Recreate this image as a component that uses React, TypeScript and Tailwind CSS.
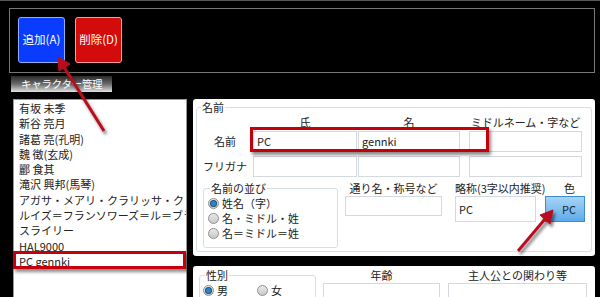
import React from 'react';

const names = [
  '有坂 未季',
  '新谷 亮月',
  '諸葛 亮(孔明)',
  '魏 徴(玄成)',
  '酈 食其',
  '滝沢 興邦(馬琴)',
  'アガサ・メアリ・クラリッサ・クリスティ',
  'ルイズ＝フランソワーズ＝ル＝ブラン',
  'スライリー',
  'HAL9000',
  'PC gennki',
];

const Radio: React.FC<{ checked?: boolean; label: string }> = ({ checked, label }) => (
  <div className="flex items-center h-[15px]">
    <span className="w-[11px] h-[11px] rounded-full border border-[#8e8f8f] bg-gradient-to-b from-[#e8e8e8] to-[#c9c9c9] flex items-center justify-center">
      {checked && <span className="w-[5px] h-[5px] rounded-full bg-[#2a86cc] ring-1 ring-[#1d4f78]" />}
    </span>
    <span className="ml-[3px] text-[#222]">{label}</span>
  </div>
);

const Field: React.FC<{ w: string; h?: string; value?: string }> = ({ w, h = 'h-[21px]', value }) => (
  <div className={`${w} ${h} border border-[#d4d9df] bg-white flex items-center pl-[3px] text-[#222]`}>{value}</div>
);

export default function App() {
  return (
    <div className="relative w-[600px] h-[297px] bg-black overflow-hidden text-[11px] font-['Noto_Sans_CJK_JP','Noto_Sans',sans-serif]">
      <div className="h-[1px] bg-[#555]" />
      {/* toolbar */}
      <div className="ml-[9px] mt-[7px] w-[586px] h-[65px] border border-[#777] flex gap-[10px] pl-[8px] pt-[8px]">
        <button className="w-[47px] h-[46px] rounded-[3px] border border-[#8fb0ff] bg-[#0a3cff] text-white text-[11.5px]">追加(A)</button>
        <button className="w-[47px] h-[46px] rounded-[3px] border border-[#ff9a9a] bg-[#d40b0b] text-white text-[11.5px]">削除(D)</button>
      </div>
      <div className="ml-[11px] mt-[3px] w-[101px] h-[16px] bg-gradient-to-b from-[#2a2a2a] via-[#6a6a6a] to-[#e4e4e4] text-white text-[10.5px] leading-[15px] pl-[10px] tracking-[-0.3px]">
        キャラクター管理
      </div>

      <div className="flex mt-[7px]">
        {/* list */}
        <div className="ml-[13px] w-[174px] h-[200px] bg-white border border-[#9a9a9a] pt-[1px] pl-[5px] overflow-hidden">
          {names.map((n) => (
            <div key={n} className="h-[15.3px] leading-[15.3px] whitespace-nowrap text-[#222]">{n}</div>
          ))}
        </div>

        {/* right */}
        <div className="ml-[6px] w-[402px]">
          <div className="h-[157px] bg-white rounded-[3px] pl-[3px] pr-[3px]">
            <fieldset className="border border-[#d5dfe5] rounded-[3px] h-[153px]">
              <legend className="ml-[4px] px-[1px] leading-[16px] text-[#222]">名前</legend>
              <div className="flex h-[14px] leading-[14px] text-[#222]">
                <div className="w-[56px]" />
                <div className="w-[104px] text-center">氏</div>
                <div className="ml-[1px] w-[102px] text-center">名</div>
                <div className="ml-[9px] w-[113px] text-center">ミドルネーム・字など</div>
              </div>
              <div className="flex items-center mt-[2px]">
                <div className="w-[56px] text-center text-[#222]">名前</div>
                <Field w="w-[104px]" value="PC" />
                <div className="ml-[1px]"><Field w="w-[102px]" value="gennki" /></div>
                <div className="ml-[9px]"><Field w="w-[113px]" /></div>
              </div>
              <div className="flex items-center mt-[4px]">
                <div className="w-[56px] text-center text-[#222]">フリガナ</div>
                <Field w="w-[104px]" />
                <div className="ml-[1px]"><Field w="w-[102px]" /></div>
                <div className="ml-[9px]"><Field w="w-[113px]" /></div>
              </div>
              <div className="flex mt-[3px]">
                <fieldset className="ml-[6px] w-[135px] h-[68px] border border-[#d5dfe5] rounded-[3px] pl-[4px]">
                  <legend className="ml-[2px] px-[1px] leading-[16px] text-[#222]">名前の並び</legend>
                  <Radio checked label="姓名（字）" />
                  <Radio label="名・ミドル・姓" />
                  <Radio label="名＝ミドル＝姓" />
                </fieldset>
                <div className="ml-[7px] w-[97px]">
                  <div className="leading-[16px] text-center text-[#222]">通り名・称号など</div>
                  <Field w="w-[97px]" h="h-[20px]" />
                </div>
                <div className="ml-[13px] w-[81px]">
                  <div className="leading-[16px] text-center text-[#222] whitespace-nowrap">略称(3字以内推奨)</div>
                  <Field w="w-[81px]" h="h-[26px]" value="PC" />
                </div>
                <div className="ml-[9px] w-[40px]">
                  <div className="leading-[16px] text-right pr-[10px] text-[#222]">色</div>
                  <div className="h-[26px] border border-[#3d8ccc] bg-gradient-to-b from-[#a6d4f6] to-[#5eaaea] flex items-center justify-end pr-[8px] text-[#1a2533]">PC</div>
                </div>
              </div>
            </fieldset>
          </div>

          <div className="mt-[10px] h-[40px] bg-white rounded-[3px] flex pt-[1px]">
            <fieldset className="ml-[6px] w-[117px] h-[40px] border border-[#d5dfe5] rounded-[3px] pl-[3px]">
              <legend className="ml-[2px] px-[1px] leading-[16px] text-[#222]">性別</legend>
              <div className="flex">
                <div className="w-[54px]"><Radio checked label="男" /></div>
                <Radio label="女" />
              </div>
            </fieldset>
            <div className="ml-[7px] w-[117px]">
              <div className="leading-[16px] text-center text-[#222]">年齢</div>
              <Field w="w-[117px]" />
            </div>
            <div className="ml-[8px] w-[139px]">
              <div className="leading-[16px] text-center text-[#222]">主人公との関わり等</div>
              <Field w="w-[139px]" />
            </div>
          </div>
        </div>
      </div>

      {/* annotation overlays */}
      <div className="absolute left-[250px] top-[127px] w-[239px] h-[25px] border-[3px] border-[#c4000c] shadow-[2px_3px_3px_rgba(0,0,0,0.45)]" />
      <div className="absolute left-[13px] top-[251px] w-[173px] h-[18px] border-[3px] border-[#c4000c] shadow-[2px_3px_3px_rgba(0,0,0,0.45)]" />
      <svg className="absolute left-0 top-0 pointer-events-none" width="600" height="297">
        <defs>
          <filter id="sh" x="-20%" y="-20%" width="140%" height="140%">
            <feDropShadow dx="2" dy="3" stdDeviation="1.5" floodColor="#000" floodOpacity="0.5" />
          </filter>
        </defs>
        <g filter="url(#sh)" fill="#b8101c" stroke="#b8101c">
          <line x1="104" y1="131" x2="64" y2="67" strokeWidth="3" />
          <polygon points="58,57 70,64 59,71" strokeWidth="1" />
          <line x1="518" y1="251" x2="545" y2="219" strokeWidth="3" />
          <polygon points="553,210 550,224 540,215" strokeWidth="1" />
        </g>
      </svg>
    </div>
  );
}
